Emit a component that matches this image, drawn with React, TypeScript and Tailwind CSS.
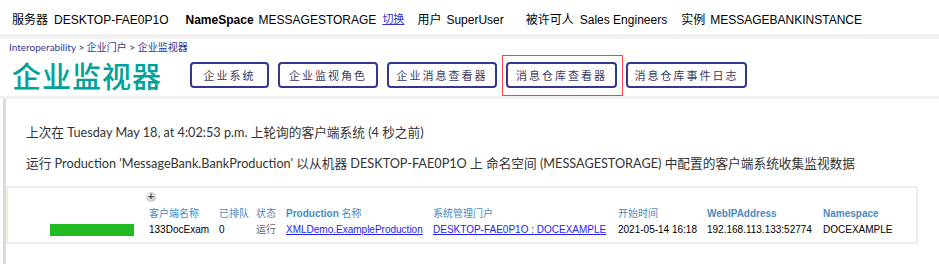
import { JSX } from 'react';

const sans = { fontFamily: '"Liberation Sans", Arial, "Noto Sans CJK SC", sans-serif' };
const body = { fontFamily: 'Lato, "Noto Sans", "Noto Sans CJK SC", sans-serif' };
const cjk = { fontFamily: '"Noto Sans CJK SC", sans-serif' };

const navButtons = ['企业系统', '企业监视角色', '企业消息查看器', '消息仓库查看器', '消息仓库事件日志'];
const buttonWidths = ['w-[79px]', 'w-[100px]', 'w-[110px]', 'w-[111px]', 'w-[121px]'];

function TopBar(): JSX.Element {
  return (
    <div className="flex h-[34px] items-center pl-[12px] pt-[5px] text-[12px] text-black" style={sans}>
      <span>服务器</span>
      <span className="ml-[6px]">DESKTOP-FAE0P1O</span>
      <span className="ml-[17px] font-bold">NameSpace</span>
      <span className="ml-[5px]">MESSAGESTORAGE</span>
      <a className="ml-[6px] text-[11px] text-[#3333cc] underline">切换</a>
      <span className="ml-[13px]">用户</span>
      <span className="ml-[5px]">SuperUser</span>
      <span className="ml-[22px]">被许可人</span>
      <span className="ml-[6px]">Sales Engineers</span>
      <span className="ml-[14px]">实例</span>
      <span className="ml-[5px]">MESSAGEBANKINSTANCE</span>
    </div>
  );
}

function Header(): JSX.Element {
  return (
    <div className="border-t-[5px] border-[#f1f1f1] bg-white">
      <div className="pl-[9px] pt-[1px] text-[10px] leading-[14px] text-[#333695]" style={body}>
        Interoperability <span className="text-[#222]">&gt;</span> 企业门户 <span className="text-[#222]">&gt;</span> 企业监视器
      </div>
      <div className="flex h-[42px] items-center pl-[12px]">
        <h1 className="w-[178px] text-[29px] font-medium leading-none tracking-[1px] text-[#00a39a]" style={cjk}>
          企业监视器
        </h1>
        <div className="flex gap-[9px]">
          {navButtons.map((label, i) => (
            <div key={label} className="relative">
              <button
                className={`${buttonWidths[i]} h-[26px] rounded-[4px] border-2 border-[#333695] bg-white text-[11px] tracking-[2px] text-[#3a3a60]`}
                style={cjk}
              >
                {label}
              </button>
              {i === 3 && <div className="pointer-events-none absolute -bottom-[8px] -left-[4px] -right-[6px] -top-[7px] border border-[#f24a3a]" />}
            </div>
          ))}
        </div>
      </div>
    </div>
  );
}

function MonitorTable(): JSX.Element {
  const th = 'whitespace-nowrap text-[#4a89c0]';
  const td = 'whitespace-nowrap';
  return (
    <div className="mr-[21px] mt-[13px] border-2 border-[#eeeee6] pb-[4px] pt-[4px]" style={sans}>
      <div className="flex items-end">
        <div className="flex h-[16px] w-[141px] shrink-0 items-center">
          <div className="ml-[42px] h-[12px] w-[84px] bg-[#22bb22]" />
        </div>
        <div>
          <div className="mb-[4px] ml-[-3px] flex h-[10px] w-[10px] items-center justify-center rounded-full bg-[radial-gradient(circle_at_40%_35%,#f4f6f8,#aab6c2)] text-[10px] font-bold leading-none text-[#445]">
            +
          </div>
          <div className="grid grid-cols-[70px_37px_30px_147px_185px_89px_116px_auto] text-[10px] leading-[16px]">
            <div className={th}>客户端名称</div>
            <div className={th}>已排队</div>
            <div className={th}>状态</div>
            <div className={`${th} font-bold`}>Production <span className="font-normal">名称</span></div>
            <div className={th}>系统管理门户</div>
            <div className={th}>开始时间</div>
            <div className={`${th} font-bold`}>WebIPAddress</div>
            <div className={`${th} font-bold`}>Namespace</div>
            <div className={td}>133DocExam</div>
            <div className={td}>0</div>
            <div className={`${td} text-[#666]`}>运行</div>
            <div className={td}><a className="text-[#2222ee] underline">XMLDemo.ExampleProduction</a></div>
            <div className={td}><a className="text-[#2222ee] underline">DESKTOP-FAE0P1O : DOCEXAMPLE</a></div>
            <div className={td}>2021-05-14 16:18</div>
            <div className={td}>192.168.113.133:52774</div>
            <div className={td}>DOCEXAMPLE</div>
          </div>
        </div>
      </div>
    </div>
  );
}

export default function App(): JSX.Element {
  return (
    <div className="h-[264px] w-[939px] overflow-hidden bg-white">
      <TopBar />
      <Header />
      <div className="h-full border-t-[3px] border-[#f1f1f1]">
        <div className="ml-[3px] h-full border-l-[3px] border-[#dcdcd2]">
          <div className="pl-[20px] pt-[23px] text-[12.7px] text-[#333]" style={body}>
            <p className="leading-[20px]">上次在 Tuesday May 18, at 4:02:53 p.m. 上轮询的客户端系统 (4 秒之前)</p>
            <p className="mt-[11px] whitespace-nowrap leading-[20px]">
              运行 Production 'MessageBank.BankProduction' 以从机器 DESKTOP-FAE0P1O 上 命名空间 (MESSAGESTORAGE) 中配置的客户端系统收集监视数据
            </p>
          </div>
          <MonitorTable />
        </div>
      </div>
    </div>
  );
}
